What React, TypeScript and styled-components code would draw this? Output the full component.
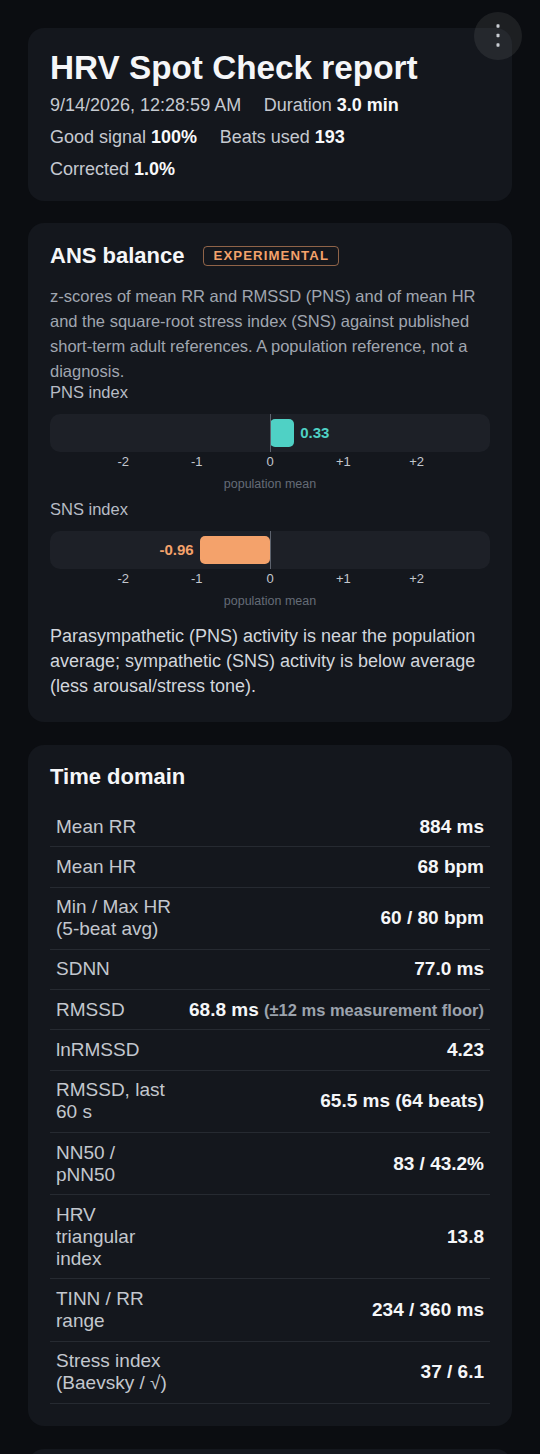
import React from 'react';
import styled, { createGlobalStyle } from 'styled-components';

const GlobalStyle = createGlobalStyle`
  html, body {
    margin: 0;
    background: #0b0d11;
  }
  body {
    font-family: "Liberation Sans", Arial, Helvetica, sans-serif;
    color: #e5e7eb;
  }
`;

type Metric = {
  label: string;
  value: string;
  note?: string;
};

const timeDomain: Metric[] = [
  { label: 'Mean RR', value: '884 ms' },
  { label: 'Mean HR', value: '68 bpm' },
  { label: 'Min / Max HR (5-beat avg)', value: '60 / 80 bpm' },
  { label: 'SDNN', value: '77.0 ms' },
  { label: 'RMSSD', value: '68.8 ms', note: '(±12 ms measurement floor)' },
  { label: 'lnRMSSD', value: '4.23' },
  { label: 'RMSSD, last 60 s', value: '65.5 ms (64 beats)' },
  { label: 'NN50 / pNN50', value: '83 / 43.2%' },
  { label: 'HRV triangular index', value: '13.8' },
  { label: 'TINN / RR range', value: '234 / 360 ms' },
  { label: 'Stress index (Baevsky / √)', value: '37 / 6.1' },
];

// z-score axis runs from -3 to +3 across the track
const Z_RANGE = 3;
const TICKS = ['-2', '-1', '0', '+1', '+2'];

type Tone = 'pns' | 'sns';

const toneColor = (tone: Tone) => (tone === 'pns' ? '#4fd1c5' : '#f4a26b');

type GaugeProps = {
  label: string;
  value: number;
  tone: Tone;
};

const Gauge: React.FC<GaugeProps> = ({ label, value, tone }) => {
  const pct = (Math.min(Math.abs(value), Z_RANGE) / Z_RANGE) * 50;
  const positive = value >= 0;

  const barStyle = positive
    ? { left: '50%', width: `${pct}%` }
    : { right: '50%', width: `${pct}%` };
  const valueStyle = positive
    ? { left: `calc(50% + ${pct}% + 6px)` }
    : { right: `calc(50% + ${pct}% + 6px)` };

  return (
    <GaugeBlock>
      <GaugeLabel>{label}</GaugeLabel>
      <Track>
        <Bar $tone={tone} style={barStyle} />
        <ZeroLine />
        <BarValue $tone={tone} style={valueStyle}>{value.toFixed(2)}</BarValue>
      </Track>
      <Ticks>
        {TICKS.map((t) => <Tick key={t}>{t}</Tick>)}
      </Ticks>
      <AxisCaption>population mean</AxisCaption>
    </GaugeBlock>
  );
};

const MenuDots = () => (
  <svg width="6" height="28" viewBox="0 0 6 28" aria-hidden="true">
    <rect x="1.5" y="2.2" width="3" height="3.6" rx="0.8" fill="#c9cdd3" />
    <rect x="1.5" y="11.7" width="3" height="3.6" rx="0.8" fill="#c9cdd3" />
    <rect x="1.5" y="21.2" width="3" height="3.6" rx="0.8" fill="#c9cdd3" />
  </svg>
);

const App: React.FC = () => {
  return (
    <>
      <GlobalStyle />
      <Page>
        <MenuButton aria-label="More">
          <MenuDots />
        </MenuButton>

        <Card>
          <Title>HRV Spot Check report</Title>
          <Meta>
            <MetaItem>9/14/2026, 12:28:59 AM</MetaItem>
            <MetaItem>Duration <b>3.0 min</b></MetaItem>
            <MetaItem>Good signal <b>100%</b></MetaItem>
            <MetaItem>Beats used <b>193</b></MetaItem>
            <MetaItem>Corrected <b>1.0%</b></MetaItem>
          </Meta>
        </Card>

        <Card>
          <CardHeader>
            <SectionTitle>ANS balance</SectionTitle>
            <Badge>EXPERIMENTAL</Badge>
          </CardHeader>
          <Description>
            z-scores of mean RR and RMSSD (PNS) and of mean HR and the square-root stress index (SNS)
            against published short-term adult references. A population reference, not a diagnosis.
          </Description>
          <Gauge label="PNS index" value={0.33} tone="pns" />
          <Gauge label="SNS index" value={-0.96} tone="sns" />
          <Summary>
            Parasympathetic (PNS) activity is near the population average; sympathetic (SNS)
            activity is below average (less arousal/stress tone).
          </Summary>
        </Card>

        <Card>
          <SectionTitle>Time domain</SectionTitle>
          <MetricTable>
            {timeDomain.map((m) => (
              <MetricRow key={m.label}>
                <MetricLabel>{m.label}</MetricLabel>
                <MetricValue>
                  {m.value}
                  {m.note && <> <MetricNote>{m.note}</MetricNote></>}
                </MetricValue>
              </MetricRow>
            ))}
          </MetricTable>
        </Card>

        {/* next section starts just below the fold */}
        <Card $minHeight={160} />
      </Page>
    </>
  );
};

const Page = styled.div`
  position: relative;
  display: flex;
  flex-direction: column;
  gap: 22.5px;
  padding: 28px;
`;

const MenuButton = styled.button`
  position: absolute;
  top: 12px;
  right: 18px;
  z-index: 2;
  width: 48px;
  height: 48px;
  display: flex;
  align-items: center;
  justify-content: center;
  padding: 0;
  border: none;
  border-radius: 50%;
  background: rgba(255, 255, 255, 0.075);
  cursor: pointer;
`;

const Card = styled.section<{ $minHeight?: number }>`
  background: #14171d;
  border-radius: 16px;
  padding: 20px 22px;
  ${({ $minHeight }) => ($minHeight ? `min-height: ${$minHeight}px;` : '')}
`;

const Title = styled.h1`
  margin: 0 0 5px;
  font-size: 33.3px;
  line-height: 1.2;
  font-weight: 700;
  color: #f5f6f8;
`;

const Meta = styled.div`
  display: flex;
  flex-wrap: wrap;
  row-gap: 8px;
  font-size: 18px;
  line-height: 24px;
  color: #c5c9d0;

  b {
    font-weight: 700;
    color: #f8f9fa;
  }
`;

const MetaItem = styled.span`
  margin-right: 22.5px;
  white-space: nowrap;
`;

const CardHeader = styled.div`
  display: flex;
  align-items: center;
  gap: 18px;
  margin-bottom: 16px;
  padding-top: 1px;
`;

const SectionTitle = styled.h2`
  margin: 0;
  font-size: 22px;
  line-height: 24px;
  font-weight: 700;
  color: #f5f6f8;
`;

const Badge = styled.span`
  display: inline-block;
  height: 18px;
  line-height: 18px;
  padding: 0 9px 0 10px;
  border: 1px solid rgba(244, 162, 107, 0.55);
  border-radius: 4px;
  font-size: 13.2px;
  font-weight: 700;
  letter-spacing: 1.1px;
  color: #f4a26b;
`;

const Description = styled.p`
  margin: 0;
  font-size: 16.5px;
  line-height: 1.5;
  color: #a0a6b0;
`;

const GaugeBlock = styled.div`
  & + & {
    margin-top: 8px;
  }
`;

const GaugeLabel = styled.div`
  font-size: 16.5px;
  line-height: 19px;
  color: #b7bcc5;
`;

const Track = styled.div`
  position: relative;
  height: 38px;
  margin-top: 12px;
  border-radius: 10px;
  background: #1d2027;
`;

const Bar = styled.div<{ $tone: Tone }>`
  position: absolute;
  top: 5px;
  bottom: 5px;
  border-radius: 5px;
  background: ${({ $tone }) => toneColor($tone)};
`;

const ZeroLine = styled.div`
  position: absolute;
  left: 50%;
  top: 0;
  bottom: 0;
  width: 1px;
  background: #5d636e;
`;

const BarValue = styled.span<{ $tone: Tone }>`
  position: absolute;
  top: 50%;
  transform: translateY(-53%);
  font-size: 15px;
  font-weight: 700;
  color: ${({ $tone }) => toneColor($tone)};
`;

const Ticks = styled.div`
  display: grid;
  grid-template-columns: repeat(5, 1fr);
  padding: 0 8.3333%;
  margin-top: 2px;
  font-size: 13px;
  line-height: 15px;
  color: #c3c7ce;
`;

const Tick = styled.span`
  text-align: center;
`;

const AxisCaption = styled.div`
  margin-top: 8px;
  text-align: center;
  font-size: 12.5px;
  line-height: 14.5px;
  color: #656c77;
`;

const Summary = styled.p`
  margin: 16px 0 3px;
  font-size: 18px;
  line-height: 25px;
  color: #d2d6dc;
`;

const MetricTable = styled.div`
  margin: 18px 0 2px;
`;

const MetricRow = styled.div`
  display: flex;
  align-items: center;
  border-bottom: 1px solid #262a31;
  font-size: 19px;
  line-height: 22px;
`;

const MetricLabel = styled.div`
  flex: 0 0 118px;
  padding: 8.65px 6px;
  color: #c3c7ce;
`;

const MetricValue = styled.div`
  flex: 1;
  padding: 8.65px 6px;
  text-align: right;
  font-weight: 700;
  color: #f5f6f8;
`;

const MetricNote = styled.span`
  font-size: 16.5px;
  color: #9ca3ad;
`;

export default App;
